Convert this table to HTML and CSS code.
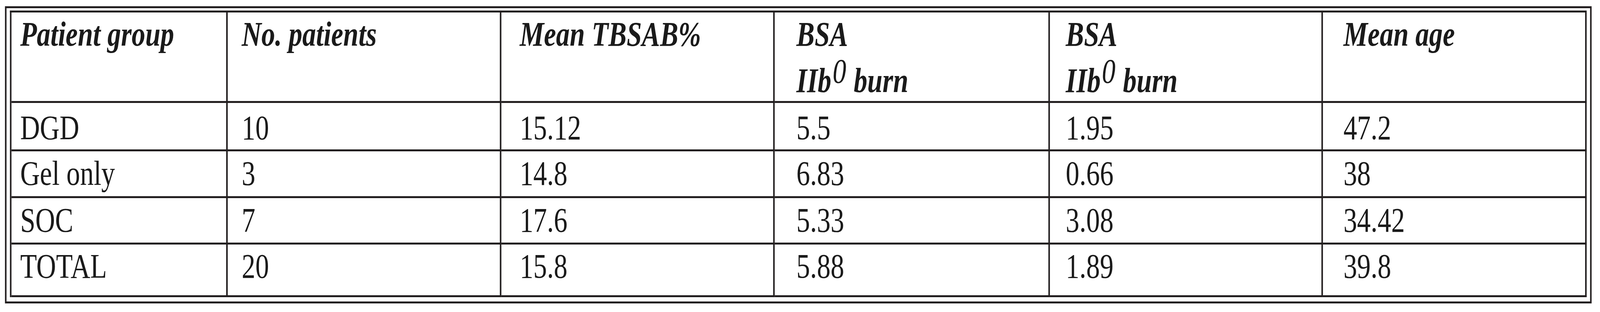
FILE: index.html
```html
<!DOCTYPE html>
<html lang="en">
<head>
<meta charset="utf-8">
<title>Patient groups</title>
<link rel="stylesheet" href="styles.css">
</head>
<body>
<div class="page">
<div class="frame">
  <div class="tbl" role="table">
    <div class="c h c1" role="columnheader"><span class="l">Patient group</span></div>
    <div class="c h c2" role="columnheader"><span class="l">No. patients</span></div>
    <div class="c h c3" role="columnheader"><span class="l">Mean TBSAB%</span></div>
    <div class="c h c4" role="columnheader"><span class="l">BSA</span><span class="l l2">IIb<span class="sup">0</span> burn</span></div>
    <div class="c h c5" role="columnheader"><span class="l">BSA</span><span class="l l2">IIb<span class="sup">0</span> burn</span></div>
    <div class="c h c6" role="columnheader"><span class="l">Mean age</span></div>

    <div class="c r1 c1">DGD</div>
    <div class="c r1 c2">10</div>
    <div class="c r1 c3">15.12</div>
    <div class="c r1 c4">5.5</div>
    <div class="c r1 c5">1.95</div>
    <div class="c r1 c6">47.2</div>

    <div class="c r2 c1">Gel only</div>
    <div class="c r2 c2">3</div>
    <div class="c r2 c3">14.8</div>
    <div class="c r2 c4">6.83</div>
    <div class="c r2 c5">0.66</div>
    <div class="c r2 c6">38</div>

    <div class="c r3 c1">SOC</div>
    <div class="c r3 c2">7</div>
    <div class="c r3 c3">17.6</div>
    <div class="c r3 c4">5.33</div>
    <div class="c r3 c5">3.08</div>
    <div class="c r3 c6">34.42</div>

    <div class="c r4 c1">TOTAL</div>
    <div class="c r4 c2">20</div>
    <div class="c r4 c3">15.8</div>
    <div class="c r4 c4">5.88</div>
    <div class="c r4 c5">1.89</div>
    <div class="c r4 c6">39.8</div>
  </div>
</div>
</div>
</body>
</html>
```

FILE: styles.css
```css
html, body {
  margin: 0;
  padding: 0;
  background: #ffffff;
  overflow: hidden;
}

body {
  font-family: "Liberation Serif", "Times New Roman", serif;
  color: #1a1a1a;
}

/* the browser window is 4096px wide: the 5157px-wide design is fitted horizontally */
.page {
  transform: scaleX(0.79426);
  transform-origin: 0 0;
  padding-top: 16px;
}

.frame {
  margin-left: 16px;
  width: fit-content;
  border: 5px solid #231f20;
  padding: 6px 11px 11px 11px;
}

.tbl {
  display: grid;
  grid-template-columns: 697px 882px 881px 887px 880px 850px;
  grid-template-rows: 232px 124px 120px 119px 135px;
  border-left: 5px solid #231f20;
  border-top: 5px solid #231f20;
}

.c {
  box-sizing: border-box;
  border-right: 5px solid #231f20;
  border-bottom: 5px solid #231f20;
  font-size: 88px;
  line-height: 100px;
  white-space: nowrap;
  overflow: hidden;
}

.h {
  font-weight: bold;
  font-style: italic;
  padding-top: 6px;
}

.l {
  display: block;
}

.l2 {
  margin-top: 19px;
}

.sup {
  font-weight: normal;
  vertical-align: 24px;
  line-height: 0;
  margin-left: 4px;
  margin-right: 2px;
}

.r1 { padding-top: 14px; }
.r2 { padding-top: 7px; }
.r3 { padding-top: 7px; }
.r4 { padding-top: 6px; }

.c1 { padding-left: 28px; }
.c2 { padding-left: 45px; }
.c3 { padding-left: 59px; }
.c4 { padding-left: 70px; }
.c5 { padding-left: 51px; }
.c6 { padding-left: 66px; }
```
